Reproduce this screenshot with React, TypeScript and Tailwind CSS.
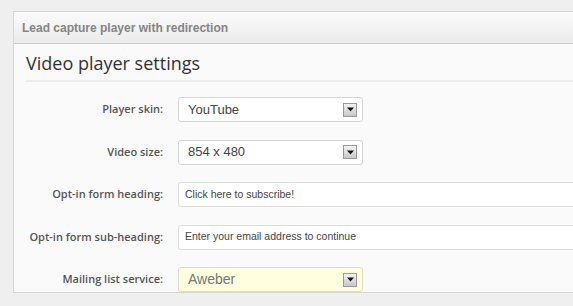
const rows = [
  { label: "Player skin:", kind: "select", value: "YouTube" },
  { label: "Video size:", kind: "select", value: "854 x 480" },
  { label: "Opt-in form heading:", kind: "input", value: "Click here to subscribe!" },
  { label: "Opt-in form sub-heading:", kind: "input", value: "Enter your email address to continue" },
  { label: "Mailing list service:", kind: "highlight", value: "Aweber" },
];

function Arrow() {
  return (
    <span className="flex h-[14px] w-[14px] items-center justify-center border border-[#9a9a9a] bg-gradient-to-b from-[#f4f4f4] to-[#c8c8c8]">
      <svg width="7" height="5" viewBox="0 0 7 5">
        <path d="M0 0.5h7L3.5 4.5z" fill="#111" />
      </svg>
    </span>
  );
}

export default function App() {
  return (
    <main className="h-[306px] w-[573px] overflow-hidden bg-[#efefef] pl-[13px] pt-[11px] font-['Liberation_Sans',sans-serif]">
      <section className="w-[600px] border border-[#d6d6d6] bg-[#fafafa]">
        {/* Header */}
        <div className="flex h-[32px] items-center border-b border-[#cfcfcf] bg-gradient-to-b from-[#fbfbfb] to-[#ebebeb] pl-[8px] text-[12px] font-bold text-[#848484]">
          Lead capture player with redirection
        </div>

        <div className="pl-[12px]">
          <h1 className="border-b-2 border-[#ececec] pb-[6px] pt-[8px] font-['Open_Sans',sans-serif] text-[18px] leading-[22px] text-[#333]">
            Video player settings
          </h1>

          {/* Form rows */}
          <div className="flex flex-col gap-[17.5px] pt-[15px]">
            {rows.map((row) => (
              <div key={row.label} className="flex items-center">
                <label className="w-[152px] pr-[15px] text-right font-['Open_Sans',sans-serif] text-[11px] font-semibold text-[#555]">
                  {row.label}
                </label>
                {row.kind === "input" ? (
                  <div className="flex h-[25px] flex-1 items-center rounded-[3px] border border-[#dcdcdc] bg-white pl-[6px] text-[10.5px] text-[#444]">
                    {row.value}
                  </div>
                ) : (
                  <div
                    className={`flex h-[25px] w-[185px] items-center justify-between rounded-[3px] border pl-[9px] pr-[5px] ${
                      row.kind === "highlight"
                        ? "border-[#e0dcc0] bg-[#ffffe0] pl-[6px] text-[14px] text-[#777]"
                        : "border-[#d4d4d4] bg-white text-[13px] text-[#444]"
                    }`}
                  >
                    <span>{row.value}</span>
                    <Arrow />
                  </div>
                )}
              </div>
            ))}
          </div>
        </div>
      </section>
    </main>
  );
}
